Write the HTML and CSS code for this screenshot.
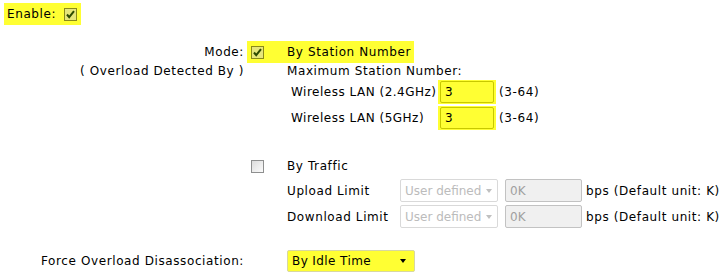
FILE: index.html
```html
<html>
<head>
    <link rel="stylesheet" href="styles.css">
</head>
<body>
<div class="page">
    <div class="enable">
        <span class="hl hl-enable">Enable:
            <span class="cb checked"><svg viewBox="0 0 13 13" width="13" height="13"><path d="M3 6.5 L5.2 9.2 L10 3.2" fill="none" stroke="#2d4a00" stroke-width="2"/></svg></span>
        </span>
    </div>

    <div class="cfg">
        <div class="lbl row-mode">Mode:</div>
        <div class="hl hl-mode">
            <span class="cb checked"><svg viewBox="0 0 13 13" width="13" height="13"><path d="M3 6.5 L5.2 9.2 L10 3.2" fill="none" stroke="#2d4a00" stroke-width="2"/></svg></span>
            <span>By Station Number</span>
        </div>

        <div class="lbl row-sub">( Overload Detected By )</div>
        <div></div>
        <div class="row-sub">Maximum Station Number:</div>

        <div></div>
        <div></div>
        <div class="wlan">
            <span class="wlan-lbl">Wireless LAN (2.4GHz)</span>
            <span class="hl hl-input"><input class="num" type="text" value="3"></span>
            <span>(3-64)</span>

            <span class="wlan-lbl">Wireless LAN (5GHz)</span>
            <span class="hl hl-input"><input class="num" type="text" value="3"></span>
            <span>(3-64)</span>
        </div>

        <div class="row-traffic"></div>
        <div class="cb-cell row-traffic"><span class="cb"></span></div>
        <div class="row-traffic">By Traffic</div>

        <div></div>
        <div></div>
        <div class="limits">
            <span>Upload Limit</span>
            <span class="sel-wrap off">
                <select class="sel" disabled><option>User defined</option></select>
                <span class="arrow"></span>
            </span>
            <input class="rate" type="text" value="0K" disabled>
            <span>bps (Default unit: K)</span>

            <span>Download Limit</span>
            <span class="sel-wrap off">
                <select class="sel" disabled><option>User defined</option></select>
                <span class="arrow"></span>
            </span>
            <input class="rate" type="text" value="0K" disabled>
            <span>bps (Default unit: K)</span>
        </div>

        <div class="lbl row-force">Force Overload Disassociation:</div>
        <div class="row-force"></div>
        <div class="row-force">
            <span class="sel-wrap force">
                <select class="sel"><option>By Idle Time</option></select>
                <span class="arrow"></span>
            </span>
        </div>
    </div>
</div>
</body>
</html>
```

FILE: styles.css
```css
body{
    margin: 0;
    background-color: #fff;
    color: #000;
    font-family: "DejaVu Sans", Verdana, sans-serif;
    font-size: 12px;
    letter-spacing: 0.6px;
}

.page{
    padding: 3px 0 0 4px;
}

.hl{
    background-color: #ffff33;
}

.hl-enable{
    display: inline-flex;
    align-items: center;
    height: 22px;
    padding: 0 4px 0 3px;
    gap: 8px;
}

/* checkboxes */
.cb{
    display: inline-block;
    box-sizing: border-box;
    width: 13px;
    height: 13px;
    border: 1px solid #8e8f8f;
    background: linear-gradient(135deg, #dcdcdc, #fbfbfb);
}

.cb svg{
    display: block;
    margin: -1px;
}

.cb.checked{
    border-color: #8a8a1a;
    background: #e6e67a;
}

.cfg{
    display: grid;
    grid-template-columns: 239px 44px 1fr;
    margin-top: 16px;
}

.lbl{
    text-align: right;
    display: flex;
    align-items: center;
    justify-content: flex-end;
    margin-right: -1px;
}

.row-mode{
    height: 22px;
}

.hl-mode{
    grid-column: 2 / 4;
    justify-self: start;
    display: flex;
    align-items: center;
    height: 22px;
    margin-left: 4px;
    padding: 0 3px 0 4px;
}

.hl-mode .cb{
    margin-right: 23px;
}

.row-sub{
    height: 16px;
    display: flex;
    align-items: center;
}

.wlan{
    display: grid;
    grid-template-columns: 147px 58px auto;
    justify-content: start;
    align-items: center;
    row-gap: 2px;
    padding: 1px 0 0 4px;
}

.wlan-lbl{
    letter-spacing: 0.5px;
}

.hl-input{
    display: block;
    padding: 1px 2px;
}

.num{
    display: block;
    box-sizing: border-box;
    width: 54px;
    height: 22px;
    margin: 0;
    border: 1px solid #c8c800;
    border-radius: 2px;
    background: transparent;
    font: inherit;
    padding: 0 4px;
    color: #000;
}

.wlan span:nth-child(3n){
    margin-left: 3px;
}

.row-traffic{
    margin-top: 27px;
    height: 18px;
    display: flex;
    align-items: center;
}

.cb-cell{
    padding-left: 8px;
}

.limits{
    display: grid;
    grid-template-columns: 113px 98px 77px auto;
    column-gap: 0;
    align-items: center;
    row-gap: 3px;
    justify-content: start;
    margin-top: 4px;
}

.limits .rate{
    margin-left: 7px;
}

.limits span:nth-child(4n){
    margin-left: 11px;
}

.sel-wrap{
    position: relative;
    display: block;
}

.sel{
    appearance: none;
    -webkit-appearance: none;
    display: block;
    box-sizing: border-box;
    width: 98px;
    height: 23px;
    margin: 0;
    padding: 0 4px;
    border: 1px solid #c9c9c9;
    border-radius: 2px;
    background: #fff;
    font: inherit;
    letter-spacing: 0;
    color: #a0a0a0;
}

.arrow{
    position: absolute;
    right: 6px;
    top: 10px;
    border-left: 3px solid transparent;
    border-right: 3px solid transparent;
    border-top: 4px solid #c0c0c0;
}

.rate{
    box-sizing: border-box;
    width: 77px;
    height: 23px;
    margin: 0;
    padding: 0 4px;
    border: 1px solid #c2c2c2;
    border-radius: 2px;
    background: #f0f0f0;
    font: inherit;
    color: #a0a0a0;
}

.row-force{
    margin-top: 22px;
    height: 22px;
    display: flex;
    align-items: center;
}

.force .sel{
    width: 128px;
    height: 22px;
    border-color: #d8d8a0;
    background: #ffff33;
    color: #000;
    letter-spacing: 0.4px;
}

.force .arrow{
    right: 9px;
    top: 9px;
    border-top-color: #000;
}
```
